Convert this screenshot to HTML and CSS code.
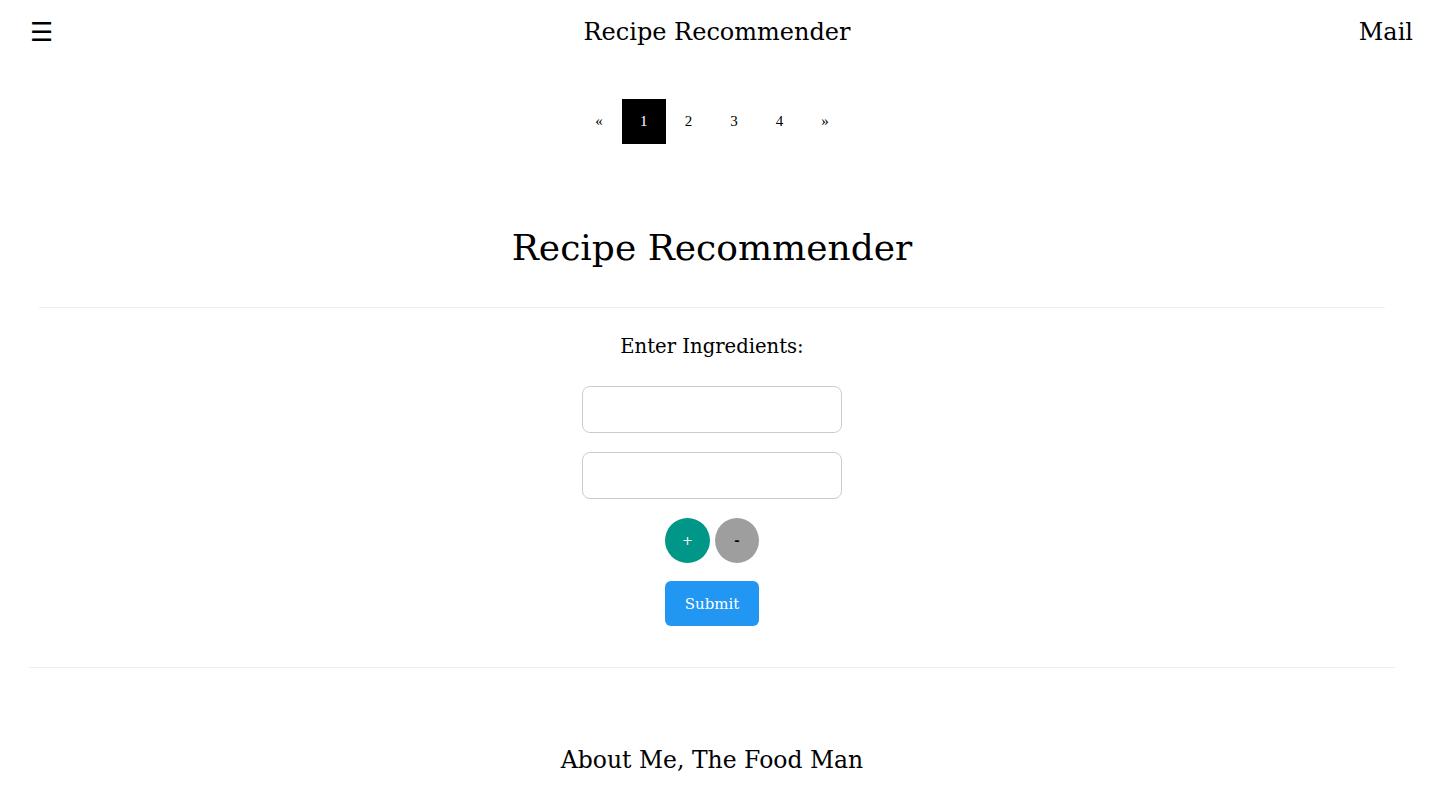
FILE: index.html
```html
<!DOCTYPE html>
<html lang="en">
<head>
<meta charset="utf-8">
<title>Recipe Recommender</title>
<link rel="stylesheet" href="styles.css">
</head>
<body>
<header class="topbar">
  <span class="bar-item menu">&#9776;</span>
  <span class="bar-item brand">Recipe Recommender</span>
  <span class="bar-item mail">Mail</span>
</header>
<main class="main">
  <nav class="pager">
    <a class="page">&laquo;</a>
    <a class="page active">1</a>
    <a class="page">2</a>
    <a class="page">3</a>
    <a class="page">4</a>
    <a class="page">&raquo;</a>
  </nav>
  <section class="recommender">
    <h1 class="title">Recipe Recommender</h1>
    <hr class="rule inner">
    <form class="form">
      <label class="label">Enter Ingredients:</label>
      <input class="field" type="text">
      <input class="field" type="text">
      <div class="circles">
        <button type="button" class="circle plus">+</button>
        <button type="button" class="circle minus">-</button>
      </div>
      <button type="button" class="submit">Submit</button>
    </form>
  </section>
  <hr class="rule outer">
  <h2 class="about">About Me, The Food Man</h2>
</main>
</body>
</html>
```
FILE: styles.css
```css
html, body {
  margin: 0;
  padding: 0;
  background: #fff;
  color: #000;
  font-family: "DejaVu Serif", "Liberation Serif", serif;
}
.topbar {
  display: grid;
  grid-template-columns: 1fr auto 1fr;
  align-items: center;
  height: 64px;
  padding: 0 12px 0 14px;
  font-size: 24px;
}
.bar-item { padding: 0 16px; }
.menu { justify-self: start; font-family: "DejaVu Sans", sans-serif; font-size: 26px; }
.brand { margin-right: 9px; }
.mail { justify-self: end; }
.main {
  padding-right: 17px;
  display: flex;
  flex-direction: column;
  align-items: stretch;
}
.pager {
  display: flex;
  justify-content: center;
  margin-top: 35px;
  font-family: "Liberation Serif", serif;
  font-size: 15px;
}
.page {
  width: 45.5px;
  height: 45px;
  display: flex;
  align-items: center;
  justify-content: center;
  color: #000;
}
.page.active { background: #000; color: #fff; width: 44px; }
.recommender {
  padding: 0 10px;
  display: flex;
  flex-direction: column;
}
.title {
  margin: 78px 0 0;
  font-weight: normal;
  font-size: 36px;
  text-align: center;
  line-height: 52px;
}
.rule {
  border: 0;
  border-top: 1px solid #eee;
  margin: 0;
}
.rule.inner { margin: 33px 29px 0; }
.rule.outer { margin: 41px 29px 0; }
.form {
  display: flex;
  flex-direction: column;
  align-items: center;
}
.label {
  margin-top: 26px;
  font-size: 19.6px;
  line-height: 26px;
}
.field {
  box-sizing: border-box;
  width: 260px;
  height: 47px;
  border: 1px solid #ccc;
  border-radius: 8px;
  margin-top: 19px;
  font: inherit;
}
.field:first-of-type { margin-top: 26px; }
.circles {
  display: flex;
  gap: 5px;
  margin-top: 19px;
}
.circle {
  width: 45px;
  height: 45px;
  border-radius: 50%;
  border: 0;
  padding: 0;
  font-family: "DejaVu Serif", serif;
  font-size: 13px;
}
.circle.plus { background: #009688; color: #fff; }
.circle.minus { background: #9e9e9e; color: #000; width: 44px; font-weight: bold; }
.submit {
  margin-top: 18px;
  width: 94px;
  height: 45px;
  border: 0;
  border-radius: 6px;
  background: #2196f3;
  color: #fff;
  font-family: "DejaVu Serif", serif;
  font-size: 15px;
}
.about {
  margin: 78px 0 0;
  font-weight: normal;
  font-size: 23.5px;
  text-align: center;
}
```
